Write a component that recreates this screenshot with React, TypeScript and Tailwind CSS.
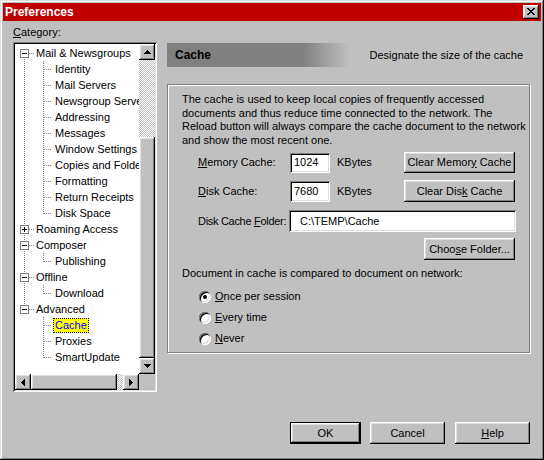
import React from "react";

const raised =
  "shadow-[inset_-1px_-1px_#000,inset_1px_1px_#fff,inset_-2px_-2px_#808080,inset_2px_2px_#dfdfdf]";
const sunken =
  "shadow-[inset_1px_1px_#808080,inset_-1px_-1px_#fff,inset_2px_2px_#000,inset_-2px_-2px_#dfdfdf]";
const dither =
  "bg-[conic-gradient(#fff_25%,#c0c0c0_0_50%,#fff_0_75%,#c0c0c0_0)] bg-[length:2px_2px]";
const dotV = "absolute w-px bg-[linear-gradient(#808080_50%,transparent_50%)] bg-[length:1px_2px]";
const dotH = "absolute h-px bg-[linear-gradient(to_right,#808080_50%,transparent_50%)] bg-[length:2px_1px]";

const tree = [
  {
    label: "Mail & Newsgroups",
    open: true,
    children: [
      "Identity",
      "Mail Servers",
      "Newsgroup Servers",
      "Addressing",
      "Messages",
      "Window Settings",
      "Copies and Folders",
      "Formatting",
      "Return Receipts",
      "Disk Space",
    ],
  },
  { label: "Roaming Access", open: false, children: [] as string[] },
  { label: "Composer", open: true, children: ["Publishing"] },
  { label: "Offline", open: true, children: ["Download"] },
  { label: "Advanced", open: true, children: ["Cache", "Proxies", "SmartUpdate"] },
];

type Row = {
  label: string;
  root: boolean;
  open?: boolean;
  up: boolean;
  down: boolean;
  last?: boolean;
};

function buildRows(): Row[] {
  const rows: Row[] = [];
  tree.forEach((n, i) => {
    const lastRoot = i === tree.length - 1;
    rows.push({ label: n.label, root: true, open: n.open, up: i > 0, down: !lastRoot });
    n.children.forEach((c, j) => {
      rows.push({ label: c, root: false, up: !lastRoot, down: !lastRoot, last: j === n.children.length - 1 });
    });
  });
  return rows;
}

function Arrow({ dir }: { dir: "up" | "down" | "left" | "right" }) {
  const d = {
    up: "M3 0h1v1H3zM2 1h3v1H2zM1 2h5v1H1zM0 3h7v1H0z",
    down: "M0 0h7v1H0zM1 1h5v1H1zM2 2h3v1H2zM3 3h1v1H3z",
    left: "M3 0h1v7H3zM2 1h1v5H2zM1 2h1v3H1zM0 3h1v1H0z",
    right: "M0 0h1v7H0zM1 1h1v5H1zM2 2h1v3H2zM3 3h1v1H3z",
  }[dir];
  const vert = dir === "up" || dir === "down";
  return (
    <div className={`w-4 h-4 shrink-0 flex items-center justify-center bg-[#c0c0c0] ${raised}`}>
      <svg width={vert ? 7 : 4} height={vert ? 4 : 7} shapeRendering="crispEdges">
        <path d={d} fill="#000" />
      </svg>
    </div>
  );
}

function TreeRow({ r }: { r: Row }) {
  const selected = r.label === "Cache";
  return (
    <div className="relative h-4 flex items-center whitespace-nowrap">
      {r.up && <span className={`${dotV} left-[9px] top-0 h-2`} />}
      {r.down && <span className={`${dotV} left-[9px] top-2 h-2`} />}
      {r.root ? (
        <>
          <span className={`${dotH} left-[14px] top-2 w-[5px]`} />
          <svg width="9" height="9" className="absolute left-[5px] top-[4px]" shapeRendering="crispEdges">
            <rect x="0.5" y="0.5" width="8" height="8" fill="#fff" stroke="#808080" />
            <path d="M2 4h5v1H2z" fill="#000" />
            {!r.open && <path d="M4 2h1v5H4z" fill="#000" />}
          </svg>
          <span className="ml-[19px] px-[2px]">{r.label}</span>
        </>
      ) : (
        <>
          <span className={`${dotV} left-[28px] top-0 ${r.last ? "h-[9px]" : "h-4"}`} />
          <span className={`${dotH} left-[29px] top-2 w-[8px]`} />
          <span
            className={
              selected
                ? "ml-[38px] px-[2px] py-px bg-[#ffff00] text-[#0000ff] outline outline-1 outline-dotted outline-black -outline-offset-1"
                : "ml-[38px] px-[2px]"
            }
          >
            {r.label}
          </span>
        </>
      )}
    </div>
  );
}

function TreeBox() {
  const rows = buildRows();
  return (
    <div className={`w-[144px] h-[350px] p-[2px] bg-white ${sunken} flex flex-col`}>
      <div className="flex h-[330px]">
        <div className="flex-1 overflow-hidden pt-px">
          {rows.map((r, i) => (
            <TreeRow key={i} r={r} />
          ))}
        </div>
        <div className="w-4 flex flex-col">
          <Arrow dir="up" />
          <div className={`h-[77px] ${dither}`} />
          <div className={`flex-1 bg-[#c0c0c0] ${raised}`} />
          <Arrow dir="down" />
        </div>
      </div>
      <div className="h-4 flex">
        <Arrow dir="left" />
        <div className={`w-[86px] bg-[#c0c0c0] ${raised}`} />
        <div className={`flex-1 ${dither}`} />
        <Arrow dir="right" />
        <div className="w-4 bg-[#c0c0c0]" />
      </div>
    </div>
  );
}

function Button({ children, className = "" }: { children: React.ReactNode; className?: string }) {
  return (
    <div className={`flex items-center justify-center whitespace-nowrap bg-[#c0c0c0] ${raised} ${className}`}>
      <span>{children}</span>
    </div>
  );
}

function Radio({ checked, children }: { checked?: boolean; children: React.ReactNode }) {
  return (
    <div className="h-[21px] flex items-center pl-[17px]">
      <div className={`w-3 h-3 rounded-full bg-white flex items-center justify-center ${sunken}`}>
        {checked && <div className="w-1 h-1 rounded-full bg-black" />}
      </div>
      <span className="ml-[4px]">{children}</span>
    </div>
  );
}

export default function App() {
  return (
    <div className="w-[544px] h-[460px] bg-[#c0c0c0] p-[3px] shadow-[inset_-1px_-1px_#000,inset_1px_1px_#dfdfdf,inset_-2px_-2px_#808080,inset_2px_2px_#fff] flex flex-col text-[11px] leading-[13px] text-black font-['Liberation_Sans',Arial,sans-serif]">
      <div className="h-[18px] shrink-0 bg-[#c00000] flex items-center pl-[2px] pr-[2px]">
        <span className="text-white font-bold text-[12px]">Preferences</span>
        <div className={`ml-auto w-4 h-[14px] flex items-center justify-center bg-[#c0c0c0] ${raised}`}>
          <svg width="8" height="7" className="-mt-px -ml-px" shapeRendering="crispEdges">
            <path
              d="M0 0h2v1H0zM6 0h2v1H6zM1 1h2v1H1zM5 1h2v1H5zM2 2h4v1H2zM3 3h2v1H3zM2 4h4v1H2zM1 5h2v1H1zM5 5h2v1H5zM0 6h2v1H0zM6 6h2v1H6z"
              fill="#000"
            />
          </svg>
        </div>
      </div>

      <div className="flex pl-[10px] pt-[5px]">
        <div className="w-[144px]">
          <div className="h-[13px] mb-[3px]">
            <u>C</u>ategory:
          </div>
          <TreeBox />
        </div>

        <div className="ml-[10px] w-[363px]">
          <div className="mt-[17px] h-6 flex items-center">
            <div className="w-[183px] h-6 flex items-center pl-2 font-bold text-[12px] bg-[linear-gradient(to_right,#808080_135px,#c0c0c0_183px)]">
              Cache
            </div>
            <span className="ml-auto mr-[7px]">Designate the size of the cache</span>
          </div>

          <div className="mt-[17px] h-[269px] border border-[#808080] shadow-[1px_1px_0_#fff,inset_1px_1px_0_#fff] pl-[14px] pt-[8px] flex flex-col">
            <p className="leading-[13.5px] whitespace-nowrap">
              The cache is used to keep local copies of frequently accessed
              <br />
              documents and thus reduce time connected to the network. The
              <br />
              Reload button will always compare the cache document to the network
              <br />
              and show the most recent one.
            </p>

            <div className="mt-[5px] h-[21px] flex items-center pl-[16px] whitespace-nowrap">
              <span className="w-[92px]">
                <u>M</u>emory Cache:
              </span>
              <div className={`w-[40px] h-[20px] bg-white pl-[4px] flex items-center ${sunken}`}>1024</div>
              <span className="w-[74px] pl-[7px]">KBytes</span>
              <Button className="w-[111px] h-[21px]">
                Clear Memor<u>y</u> Cache
              </Button>
            </div>

            <div className="mt-[7px] h-[22px] flex items-center pl-[16px] whitespace-nowrap">
              <span className="w-[92px]">
                <u>D</u>isk Cache:
              </span>
              <div className={`w-[40px] h-[21px] bg-white pl-[4px] flex items-center ${sunken}`}>7680</div>
              <span className="w-[74px] pl-[7px]">KBytes</span>
              <Button className="w-[111px] h-[22px]">
                Clear Dis<u>k</u> Cache
              </Button>
            </div>

            <div className="mt-[8px] h-[22px] flex items-center pl-[16px] whitespace-nowrap">
              <span className="w-[91px] shrink-0 tracking-[-0.3px]">
                Disk Cache <u>F</u>older:
              </span>
              <div className={`w-[227px] h-[22px] bg-white pl-[11px] flex items-center ${sunken}`}>
                C:\TEMP\Cache
              </div>
            </div>

            <div className="mt-[6px] h-[22px] flex pl-[242px]">
              <Button className="w-[91px] h-[22px]">
                Choo<u>s</u>e Folder...
              </Button>
            </div>

            <div className="mt-[7px] h-[13px] whitespace-nowrap">
              Document in cache is compared to document on network:
            </div>

            <div className="mt-[6px] flex flex-col">
              <Radio checked>
                <u>O</u>nce per session
              </Radio>
              <Radio>
                <u>E</u>very time
              </Radio>
              <Radio>
                <u>N</u>ever
              </Radio>
            </div>
          </div>
        </div>
      </div>

      <div className="flex mt-[30px] pl-[287px]">
        <div className="w-[71px] h-[22px] border border-black">
          <Button className="w-full h-full">OK</Button>
        </div>
        <Button className="ml-[9px] w-[75px] h-[22px]">Cancel</Button>
        <Button className="ml-[10px] w-[75px] h-[22px]">
          <u>H</u>elp
        </Button>
      </div>
    </div>
  );
}
